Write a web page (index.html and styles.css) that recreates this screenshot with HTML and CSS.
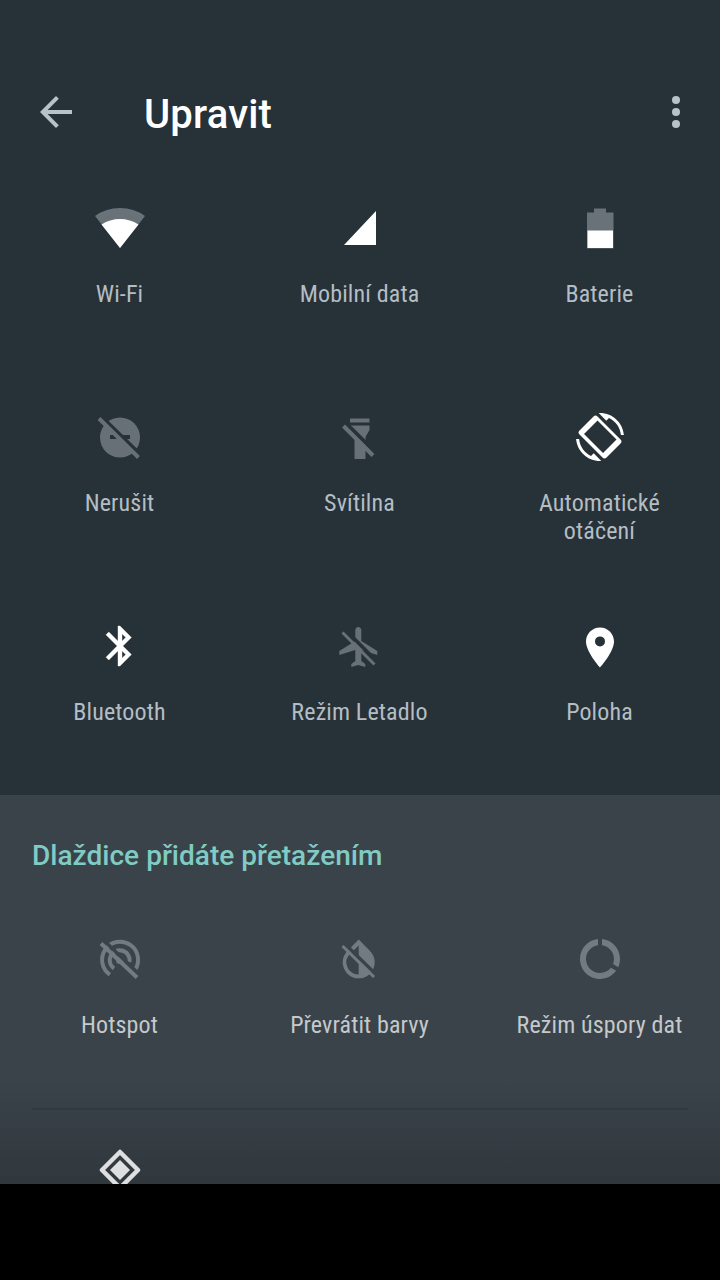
FILE: index.html
```html
<!DOCTYPE html>
<html lang="cs">
<head>
<meta charset="utf-8">
<title>Upravit</title>
<link rel="stylesheet" href="styles.css">
</head>
<body>
<main class="screen">
  <header class="toolbar">
    <svg class="back" viewBox="0 0 24 24"><path d="M20 11H7.830l5.590-5.590L12 4l-8 8 8 8 1.410-1.410L7.830 13H20v-2z"/></svg>
    <h1 class="title">Upravit</h1>
    <svg class="more" viewBox="0 0 48 48"><circle cx="24" cy="12" r="4"/><circle cx="24" cy="24" r="4"/><circle cx="24" cy="36" r="4"/></svg>
  </header>

  <section class="grid active">
    <div class="tile">
      <svg class="icon" viewBox="0 0 48 48"><path class="dim" d="M24 44-1 12Q10 4 24 4T49 12Z"/><path d="M24 44 5.500 20.500Q14 15 24 15T42.500 20.500Z"/></svg>
      <span class="label">Wi-Fi</span>
    </div>
    <div class="tile">
      <svg class="icon" viewBox="0 0 48 48"><path d="M8 41H40V7Z"/></svg>
      <span class="label">Mobilní data</span>
    </div>
    <div class="tile">
      <svg class="icon" viewBox="0 0 48 48"><path class="dim" d="M18 4.500H30V8.500H37.500V44.500H11V8.500H18Z"/><path d="M11.500 26.500H37V44H11.500Z"/></svg>
      <span class="label">Baterie</span>
    </div>
    <div class="tile">
      <svg class="icon off" viewBox="0 0 48 48"><circle cx="24" cy="24.500" r="20"/><path class="cut-fill" d="M14 22H34V26H14Z"/><path class="cut" d="M4.500 2.500 45 42"/><path class="slash" d="M3 5.500 42.500 44.500"/></svg>
      <span class="label">Nerušit</span>
    </div>
    <div class="tile">
      <svg class="icon off" viewBox="0 0 48 48"><path d="M14 5.500H33.500V9.500H14ZM14 12.500H33.500V17L29.500 24V46H18.500V24L14 17Z"/><path class="cut wide" d="M10 10.500 40 40"/><path class="slash" d="M7.500 13 37 42.500"/></svg>
      <span class="label">Svítilna</span>
    </div>
    <div class="tile">
      <svg class="icon" viewBox="0 0 48 48"><path transform="scale(2)" d="M16.480 2.520c3.270 1.550 5.610 4.720 5.970 8.480h1.500C23.440 4.840 18.290 0 12 0l-.66.03 3.810 3.810 1.330-1.320zM7.520 21.480C4.250 19.940 1.910 16.760 1.550 13H.05C.56 19.160 5.710 24 12 24l.66-.03-3.810-3.810-1.330 1.320z"/><path fill-rule="evenodd" d="M17.500 3.500Q19.500 1.500 21.500 3.500L44.500 26.500Q46.500 28.500 44.500 30.500L30.500 44.500Q28.500 46.500 26.500 44.500L3.500 21.500Q1.500 19.500 3.500 17.500ZM21.500 7.500 8 21 27 40 40.500 26.500Z"/></svg>
      <span class="label">Automatické otáčení</span>
    </div>
    <div class="tile">
      <svg class="icon bold" viewBox="0 0 24 24"><path d="M17.710 7.710L12 2h-1v7.590L6.410 5 5 6.410 10.590 12 5 17.590 6.410 19 11 14.410V22h1l5.710-5.710-4.300-4.290 4.300-4.290zM13 5.830l1.880 1.880L13 9.590V5.830zm1.880 10.460L13 18.170v-3.760l1.880 1.880z"/></svg>
      <span class="label">Bluetooth</span>
    </div>
    <div class="tile">
      <svg class="icon off" viewBox="0 0 48 48"><path transform="translate(-.7 1) scale(2)" d="M21 16v-2l-8-5V3.500c0-.83-.67-1.500-1.500-1.500S10 2.670 10 3.500V9l-8 5v2l8-2.500V19l-2 1.500V22l3.500-1 3.500 1v-1.500L13 19v-5.500l8 2.500z"/><path class="cut" d="M7.500 6 42 40.500"/><path class="slash thin" d="M6.500 10.500 38.500 42.500"/></svg>
      <span class="label">Režim Letadlo</span>
    </div>
    <div class="tile">
      <svg class="icon" viewBox="0 0 24 24"><path transform="translate(0 .7)" d="M12 2C8.130 2 5 5.130 5 9c0 5.250 7 13 7 13s7-7.750 7-13c0-3.870-3.130-7-7-7zm0 9.500a2.500 2.500 0 0 1 0-5 2.500 2.500 0 0 1 0 5z"/></svg>
      <span class="label">Poloha</span>
    </div>
  </section>

  <section class="extra">
    <h2 class="hint">Dlaždice přidáte přetažením</h2>
    <div class="grid">
      <div class="tile">
        <svg class="icon off" viewBox="0 0 48 48"><path class="ring" d="M13.900 39.600A18 18 0 1 1 38.900 35M18 33.500A10 10 0 1 1 33.500 27"/><circle cx="24" cy="25" r="4"/><path class="cut" d="M8 5.500 44 40"/><path class="slash" d="M5 8.500 41 42.500"/></svg>
        <span class="label">Hotspot</span>
      </div>
      <div class="tile">
        <svg class="icon off" viewBox="0 0 48 48"><path fill-rule="evenodd" d="M22.700 4.500 34 16A16 16 0 1 1 11.400 16ZM22.700 10.500 14.500 18.500A12 12 0 0 0 22.700 39.500Z"/><path class="cut" d="M8 8 41 40.500"/><path class="slash thin" d="M6.500 11 38 42"/></svg>
        <span class="label">Převrátit barvy</span>
      </div>
      <div class="tile">
        <svg class="icon off" viewBox="0 0 24 24"><path d="M13 2.050v3.030c3.390.49 6 3.390 6 6.920 0 .9-.18 1.750-.48 2.540l2.600 1.530c.56-1.240.88-2.620.88-4.070 0-5.180-3.950-9.450-9-9.950zM12 19c-3.870 0-7-3.130-7-7 0-3.530 2.610-6.430 6-6.920V2.050c-5.060.5-9 4.760-9 9.950 0 5.520 4.470 10 9.990 10 3.310 0 6.240-1.610 8.060-4.090l-2.600-1.530C16.170 17.980 14.210 19 12 19z"/></svg>
        <span class="label">Režim úspory dat</span>
      </div>
    </div>
    <hr class="divider">
    <div class="grid">
      <div class="tile">
        <svg class="icon app" viewBox="0 0 48 48"><path class="frame" d="M24 6 42 24 24 42 6 24Z"/><path d="M24 14 34 24 24 34 14 24Z"/></svg>
      </div>
    </div>
  </section>
  <footer class="navbar"></footer>
</main>
</body>
</html>
```

FILE: styles.css
```css
* { box-sizing: border-box; }
body { margin: 0; background: #000; font-family: Roboto, "Noto Sans", sans-serif; }
.screen { display: flex; flex-direction: column; width: 720px; height: 1280px; overflow: hidden; background: #263238; }
.toolbar { display: flex; align-items: center; flex: none; height: 160px; padding: 64px 20px 0 32px; }
.back, .more { flex: none; width: 48px; height: 48px; }
.back { fill: #b9c1ca; }
.more { fill: #b9c1ca; }
.title { flex: 1; margin: 6px 0 0 64px; color: #fff; font-size: 40px; line-height: 48px; font-weight: 500; letter-spacing: .2px; }
.grid { display: grid; grid-template-columns: repeat(3, 240px); grid-auto-rows: 209px; }
.active { flex: none; height: 635px; padding-top: 44px; }
.tile { display: flex; flex-direction: column; align-items: center; }
.icon { flex: none; width: 48px; height: 48px; overflow: visible; fill: #fff; }
.bold { stroke: #fff; stroke-width: .2; }
.label { width: 164px; margin-top: 28px; padding-right: 1px; color: #b5bdc4; font-family: "Roboto Condensed", Roboto, sans-serif; font-stretch: 75%; font-size: 24px; line-height: 28px; letter-spacing: .15px; text-align: center; }
.dim { fill: #697278; }
.off { --tone: #667076; --ground: #263238; fill: var(--tone); }
.slash { fill: none; stroke: var(--tone); stroke-width: 4; }
.thin { stroke-width: 3; }
.cut { fill: none; stroke: var(--ground); stroke-width: 3.500; }
.wide { stroke-width: 4; }
.cut-fill { fill: var(--ground); }
.ring { fill: none; stroke: var(--tone); stroke-width: 4; }
.extra { flex: none; height: 389px; overflow: hidden; background: linear-gradient(#3a434a 285px, #30383d 389px); }
.extra .off { --tone: #737b82; --ground: #3a434a; }
.extra .label { width: 200px; color: #c4c9cb; }
.hint { margin: 0; padding: 43px 32px 0; height: 140px; color: #80cbc4; font-size: 28px; line-height: 36px; font-weight: 500; letter-spacing: .03px; }
.extra .grid { grid-auto-rows: 173px; }
.divider { height: 2px; margin: 0 32px 36px; border: 0; background: #30393f; }
.icon.app { fill: #dddfe1; }
.frame { fill: none; stroke: #dddfe1; stroke-width: 4.500; stroke-linejoin: round; }
.navbar { flex: 1; background: #000; }
```
